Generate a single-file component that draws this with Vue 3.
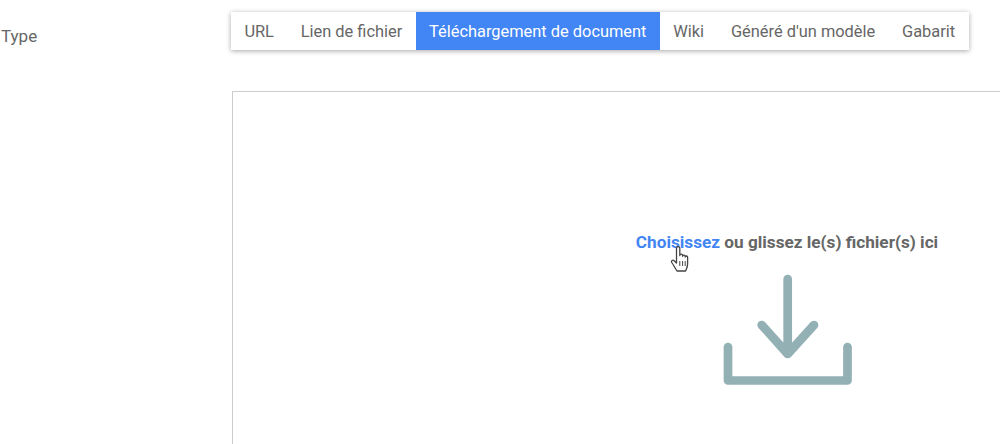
<script setup>
const tabs = [
  { label: 'URL' },
  { label: 'Lien de fichier' },
  { label: 'Téléchargement de document', active: true },
  { label: 'Wiki' },
  { label: "Généré d'un modèle" },
  { label: 'Gabarit' },
]
</script>

<template>
  <div class="page">
    <div class="label">Type</div>
    <div class="field">
      <div class="tabs">
        <span v-for="t in tabs" :key="t.label" class="tab" :class="{ active: t.active }">{{ t.label }}</span>
      </div>
      <div class="drop">
        <p class="hint"><span class="link">Choisissez<svg class="hand" viewBox="0 0 20 28" width="20" height="28"><path d="M6.500 16V3.200c0-2.200 3.300-2.200 3.300 0V10.500c0-1.800 2.800-1.800 2.800 0v.8c0-1.700 2.600-1.700 2.600 0v.8c0-1.500 2.400-1.500 2.400 0V19c0 3-1 4.500-2 7H7C5 23 3.500 20 1.800 17.500c-1-1.600 .9-3 2.400-1.800L6.500 18Z" fill="#fff" stroke="#444" stroke-width="1.300" stroke-linejoin="round" stroke-linecap="round"/><path d="M9.800 16v5M12.600 16v5M15.200 16v5" stroke="#444" stroke-width="1" fill="none"/></svg></span> ou glissez le(s) fichier(s) ici</p>
        <svg class="icon" viewBox="0 0 140 120" width="140" height="120" fill="none" stroke="#93b0b5" stroke-width="8.700" stroke-linecap="round" stroke-linejoin="round">
          <path d="M70.700 10V85M44.700 56L70.700 85L97 56" />
          <path d="M11 78V111.500H130.500V78" />
        </svg>
      </div>
    </div>
  </div>
</template>

<style scoped>
.page {
  display: flex;
  width: 1342px;
  font-family: Roboto, "Liberation Sans", sans-serif;
  font-size: 16.400px;
  color: #666;
}
.label {
  width: 232px;
  flex: none;
  box-sizing: border-box;
  padding: 26px 0 0 1px;
  line-height: 20px;
  font-size: 17px;
}
.field {
  flex: 1;
  min-width: 0;
  padding-top: 12px;
}
.tabs {
  display: inline-flex;
  height: 38px;
  margin-left: -1px;
  background: #fff;
  box-shadow: 0 1px 5px rgba(0, 0, 0, 0.35);
}
.tab {
  display: flex;
  align-items: center;
  padding: 0 13.400px;
  white-space: nowrap;
}
.active {
  background: #4285f4;
  color: #fff;
}
.drop {
  box-sizing: border-box;
  margin-top: 41px;
  height: 420px;
  border: 1px solid #ccc;
  padding-top: 140px;
  text-align: center;
}
.hint {
  margin: 0;
  font-size: 17.200px;
  font-weight: 700;
  line-height: 20px;
}
.link {
  position: relative;
  color: #4285f4;
}
.hand {
  position: absolute;
  left: 34px;
  top: 13px;
}
.icon {
  display: block;
  margin: 17px auto 0;
}
</style>

<style>
html, body { overflow: hidden; background: #fff; }
</style>
